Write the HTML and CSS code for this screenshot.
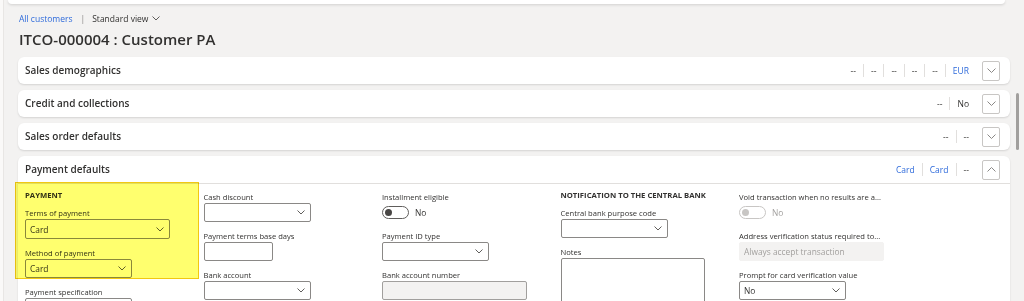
FILE: index.html
```html
<!DOCTYPE html>
<html lang="en">
<head>
<meta charset="UTF-8">
<title>ITCO-000004 : Customer PA</title>
<link rel="stylesheet" href="styles.css">
</head>
<body>

<div class="topbar"></div>

<div class="page">
  <div class="crumbs">
    <a class="crumb-link">All customers</a>
    <span class="crumb-sep">|</span>
    <span class="crumb-view">Standard view</span>
    <svg class="crumb-chev" width="8" height="5" viewBox="0 0 8 5"><path d="M0.5 0.5l3.5 3.5 3.5-3.5" fill="none" stroke="#605e5c" stroke-width="1"/></svg>
  </div>
  <h1 class="title">ITCO-000004 : Customer PA</h1>

  <div class="tab">
    <div class="tab-head">
      <div class="tab-title">Sales demographics</div>
      <div class="summary">
        <span>--</span><span>--</span><span>--</span><span>--</span><span>--</span><span class="link">EUR</span>
      </div>
      <div class="expander">
        <svg width="9" height="5" viewBox="0 0 9 5"><path d="M0.5 0.5l4 4 4-4" fill="none" stroke="#8a8886" stroke-width="1"/></svg>
      </div>
    </div>
  </div>

  <div class="tab">
    <div class="tab-head">
      <div class="tab-title">Credit and collections</div>
      <div class="summary">
        <span>--</span><span>No</span>
      </div>
      <div class="expander">
        <svg width="9" height="5" viewBox="0 0 9 5"><path d="M0.5 0.5l4 4 4-4" fill="none" stroke="#8a8886" stroke-width="1"/></svg>
      </div>
    </div>
  </div>

  <div class="tab">
    <div class="tab-head">
      <div class="tab-title">Sales order defaults</div>
      <div class="summary">
        <span>--</span><span>--</span>
      </div>
      <div class="expander">
        <svg width="9" height="5" viewBox="0 0 9 5"><path d="M0.5 0.5l4 4 4-4" fill="none" stroke="#8a8886" stroke-width="1"/></svg>
      </div>
    </div>
  </div>

  <div class="tab tab-open">
    <div class="tab-head">
      <div class="tab-title">Payment defaults</div>
      <div class="summary">
        <span class="link">Card</span><span class="link">Card</span><span>--</span>
      </div>
      <div class="expander">
        <svg width="9" height="5" viewBox="0 0 9 5"><path d="M0.5 4.5l4-4 4 4" fill="none" stroke="#8a8886" stroke-width="1"/></svg>
      </div>
    </div>

    <div class="tab-body">
      <div class="col">
        <div class="group-title">PAYMENT</div>
        <div class="field">
          <label>Terms of payment</label>
          <div class="select wide"><span>Card</span><svg width="8" height="5" viewBox="0 0 8 5"><path d="M0.5 0.5l3.5 3.5 3.5-3.5" fill="none" stroke="#605e5c"/></svg></div>
        </div>
        <div class="field">
          <label>Method of payment</label>
          <div class="select"><span>Card</span><svg width="8" height="5" viewBox="0 0 8 5"><path d="M0.5 0.5l3.5 3.5 3.5-3.5" fill="none" stroke="#605e5c"/></svg></div>
        </div>
        <div class="field">
          <label>Payment specification</label>
          <div class="select"><span></span><svg width="8" height="5" viewBox="0 0 8 5"><path d="M0.5 0.5l3.5 3.5 3.5-3.5" fill="none" stroke="#605e5c"/></svg></div>
        </div>
      </div>

      <div class="col">
        <div class="field">
          <label>Cash discount</label>
          <div class="select"><span></span><svg width="8" height="5" viewBox="0 0 8 5"><path d="M0.5 0.5l3.5 3.5 3.5-3.5" fill="none" stroke="#605e5c"/></svg></div>
        </div>
        <div class="field">
          <label>Payment terms base days</label>
          <div class="input short"></div>
        </div>
        <div class="field">
          <label>Bank account</label>
          <div class="select"><span></span><svg width="8" height="5" viewBox="0 0 8 5"><path d="M0.5 0.5l3.5 3.5 3.5-3.5" fill="none" stroke="#605e5c"/></svg></div>
        </div>
      </div>

      <div class="col">
        <div class="field">
          <label>Installment eligible</label>
          <div class="switch-row"><span class="switch"></span><span>No</span></div>
        </div>
        <div class="field">
          <label>Payment ID type</label>
          <div class="select"><span></span><svg width="8" height="5" viewBox="0 0 8 5"><path d="M0.5 0.5l3.5 3.5 3.5-3.5" fill="none" stroke="#605e5c"/></svg></div>
        </div>
        <div class="field">
          <label>Bank account number</label>
          <div class="input wide locked"></div>
        </div>
      </div>

      <div class="col">
        <div class="group-title">NOTIFICATION TO THE CENTRAL BANK</div>
        <div class="field">
          <label>Central bank purpose code</label>
          <div class="select"><span></span><svg width="8" height="5" viewBox="0 0 8 5"><path d="M0.5 0.5l3.5 3.5 3.5-3.5" fill="none" stroke="#605e5c"/></svg></div>
        </div>
        <div class="field">
          <label>Notes</label>
          <div class="notes"></div>
        </div>
      </div>

      <div class="col">
        <div class="field">
          <label>Void transaction when no results are a...</label>
          <div class="switch-row off"><span class="switch"></span><span>No</span></div>
        </div>
        <div class="field">
          <label>Address verification status required to...</label>
          <div class="input wide readonly">Always accept transaction</div>
        </div>
        <div class="field">
          <label>Prompt for card verification value</label>
          <div class="select"><span>No</span><svg width="8" height="5" viewBox="0 0 8 5"><path d="M0.5 0.5l3.5 3.5 3.5-3.5" fill="none" stroke="#605e5c"/></svg></div>
        </div>
      </div>
    </div>

    <div class="highlight"></div>
  </div>
</div>

<div class="scroll-thumb"></div>

</body>
</html>
```

FILE: styles.css
```css
body {
  margin: 0;
  background: #f3f2f1;
  font-family: "Open Sans", "Noto Sans", sans-serif;
  color: #323130;
  height: 301px;
  overflow: hidden;
  position: relative;
  box-shadow: inset 3px 0 #faf9f8, inset 4px 0 #e8e6e4;
}
.topbar {
  margin: 0 19px 0 8px;
  height: 4px;
  background: #ffffff;
  border-radius: 0 0 6px 6px;
  box-shadow: 0 1px 3px rgba(0, 0, 0, 0.14);
}
.page {
  padding: 0 14px 0 18px;
}
.crumbs {
  display: flex;
  align-items: center;
  height: 14px;
  margin-top: 7px;
  padding-left: 1px;
  font-size: 8.5px;
}
.crumb-link {
  color: #2f6bdb;
}
.crumb-sep {
  color: #8a8886;
  margin: 0 7px 0 8px;
}
.crumb-chev {
  margin-left: 4px;
}
.title {
  margin: 4px 0 8px;
  padding-left: 1px;
  font-size: 15px;
  line-height: 20px;
  font-weight: 600;
}
.tab {
  background: #ffffff;
  border-radius: 6px;
  box-shadow: 0 1px 2px rgba(0, 0, 0, 0.13);
  margin-bottom: 6px;
  position: relative;
}
.tab-head {
  height: 27px;
  display: flex;
  align-items: center;
  padding: 0 10px 0 7px;
}
.tab-title {
  flex: 1;
  font-size: 10px;
  font-weight: 600;
  margin-top: -1px;
}
.summary {
  display: flex;
  align-items: center;
  font-size: 8.5px;
  color: #323130;
}
.summary span {
  padding: 0 7px;
  line-height: 13px;
  border-left: 1px solid #e1dfdd;
}
.summary span:first-child {
  border-left: none;
}
.link {
  color: #2f6bdb;
}
.expander {
  width: 18px;
  height: 20px;
  box-sizing: border-box;
  border: 1px solid #c8c6c4;
  border-radius: 2px;
  margin-left: 6px;
  display: flex;
  align-items: center;
  justify-content: center;
}
.tab-body {
  border-top: 1px solid #e1dfdd;
  display: grid;
  grid-template-columns: repeat(4, 178.5px) 1fr;
  padding: 7px 0 10px 7px;
  height: 120px;
}
.col {
  display: flex;
  flex-direction: column;
}
.group-title {
  font-size: 7.7px;
  font-weight: 700;
  line-height: 8px;
  margin-bottom: 8px;
}
.field {
  margin-bottom: 8px;
}
.field label {
  display: block;
  font-size: 7.6px;
  line-height: 12px;
  color: #323130;
}
.select,
.input {
  height: 19px;
  width: 107px;
  box-sizing: border-box;
  border: 1px solid #8a8886;
  border-radius: 2px;
  background: #ffffff;
  display: flex;
  align-items: center;
  justify-content: space-between;
  padding: 0 5px 0 4px;
  font-size: 8.4px;
}
.wide {
  width: 145px;
}
.select.wide {
  height: 20px;
}
.short {
  width: 69px;
}
.locked {
  background: #f3f2f1;
  border-color: #a19f9d;
}
.readonly {
  background: #f3f2f1;
  border-color: #f3f2f1;
  color: #a19f9d;
}
.notes {
  width: 144px;
  height: 70px;
  box-sizing: border-box;
  border: 1px solid #8a8886;
  border-radius: 2px;
}
.switch-row {
  height: 19px;
  display: flex;
  align-items: center;
  font-size: 8.4px;
}
.switch {
  width: 27px;
  height: 13px;
  box-sizing: border-box;
  border: 1px solid #605e5c;
  border-radius: 7px;
  margin-right: 6px;
  position: relative;
}
.switch::after {
  content: "";
  position: absolute;
  left: 2px;
  top: 2px;
  width: 7px;
  height: 7px;
  border-radius: 50%;
  background: #484644;
}
.off {
  color: #a19f9d;
}
.off .switch {
  border-color: #c8c6c4;
}
.off .switch::after {
  background: #c8c6c4;
}
.highlight {
  position: absolute;
  left: -3px;
  top: 26px;
  width: 184px;
  height: 97px;
  box-sizing: border-box;
  border: 1px solid #f2c811;
  background: #ffff6e;
  mix-blend-mode: multiply;
}
.scroll-thumb {
  position: absolute;
  left: 1016px;
  top: 93px;
  width: 3px;
  height: 57px;
  border-radius: 2px;
  background: #a19f9d;
}
```
